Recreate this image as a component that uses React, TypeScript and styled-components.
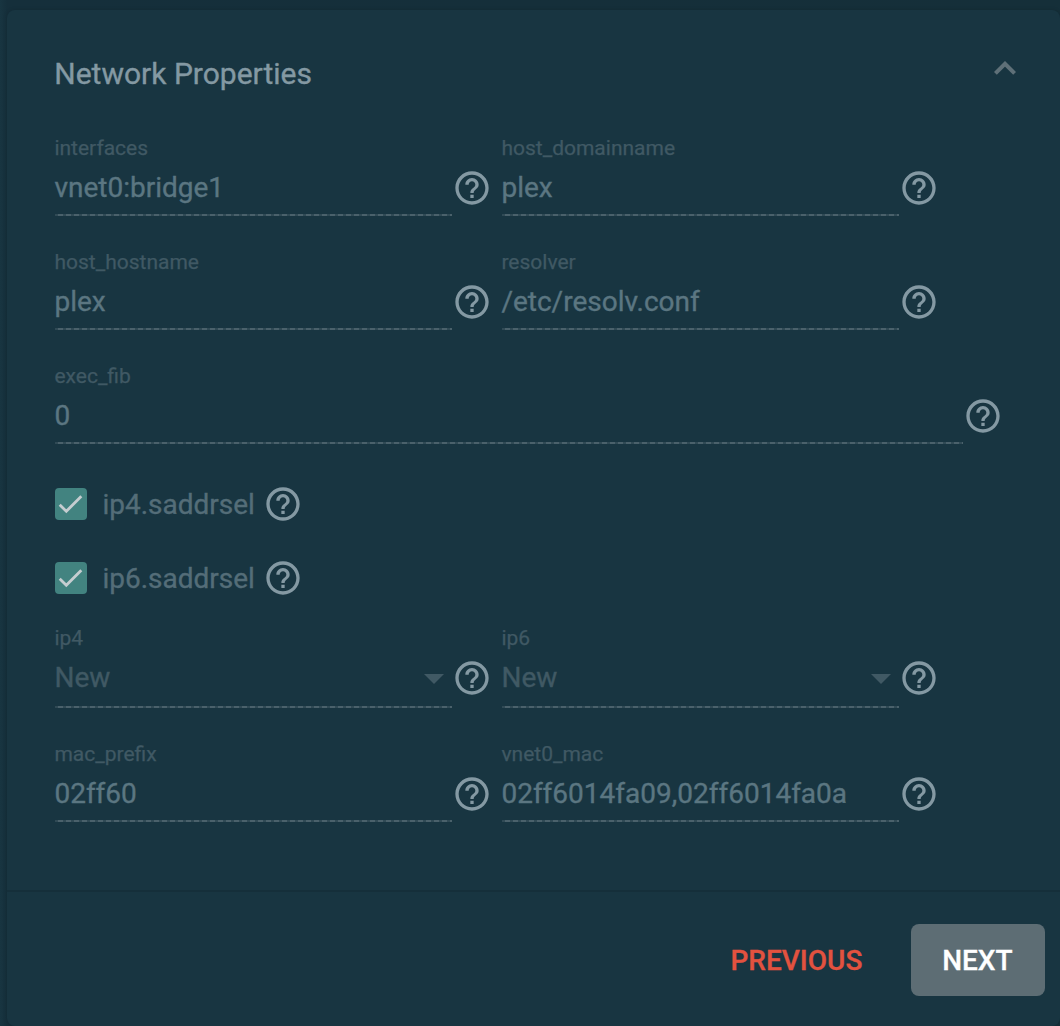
import React from "react";
import styled, { createGlobalStyle } from "styled-components";

const GlobalStyle = createGlobalStyle`
  * { box-sizing: border-box; }
  html, body { margin: 0; padding: 0; }
  body {
    background: #17323e;
    font-family: Roboto, "Liberation Sans", sans-serif;
    overflow: hidden;
  }
`;

const Page = styled.div`
  width: 1060px;
  height: 1026px;
  padding: 10px 0 0 7px;
  overflow: hidden;
  background: linear-gradient(to right, #183541 0, #152f3b 7px, #152f39 100%);
`;

const Card = styled.section`
  display: flex;
  flex-direction: column;
  height: 1016px;
  background: #183541;
  border-radius: 8px;
  box-shadow: 0 0 4px rgba(0, 0, 0, 0.14);
`;

const Header = styled.header`
  display: flex;
  justify-content: space-between;
  align-items: flex-start;
  height: 126px;
  padding: 44px 44px 0 48px;
`;

const Title = styled.h2`
  margin: 0;
  font-size: 30px;
  line-height: 39px;
  font-weight: 400;
  text-indent: -0.7px;
  color: #8499a3;
  -webkit-text-stroke: 0.35px #8499a3;
`;

const Chevron = styled.svg`
  width: 22px;
  height: 14px;
  margin-top: 7px;
  fill: none;
  stroke: #5f7078;
  stroke-width: 4;
`;

const Body = styled.div`
  display: flex;
  flex-direction: column;
  height: 754px;
  padding-left: 48px;
`;

const Row = styled.div<{ $after: number }>`
  display: flex;
  gap: 10px;
  margin-bottom: ${(p) => p.$after}px;
`;

const FieldGroup = styled.div`
  display: flex;
  align-items: flex-start;
`;

const FieldBox = styled.div<{ $width: number; $tall?: boolean }>`
  display: flex;
  flex-direction: column;
  width: ${(p) => p.$width}px;
  height: ${(p) => (p.$tall ? 82 : 80)}px;
  text-indent: -0.6px;
`;

const Label = styled.label`
  font-size: 21px;
  line-height: 24px;
  color: #405964;
  -webkit-text-stroke: 0.25px #405964;
`;

const ValueLine = styled.div<{ $dim?: boolean }>`
  display: flex;
  align-items: center;
  justify-content: space-between;
  height: 32px;
  margin-top: 12px;
  padding-right: 8px;
  font-size: 28px;
  line-height: 32px;
  white-space: nowrap;
  color: ${(p) => (p.$dim ? "#405964" : "#5b7681")};
  -webkit-text-stroke: 0.35px ${(p) => (p.$dim ? "#405964" : "#5b7681")};
`;

const Underline = styled.div`
  height: 2px;
  margin-top: auto;
  background: repeating-linear-gradient(to right, #304a55 0 3px, #4a616b 3px 8px);
`;

const Arrow = styled.span`
  border-left: 10px solid transparent;
  border-right: 10px solid transparent;
  border-top: 10px solid #405964;
  margin-top: 2px;
`;

const HelpSvg = styled.svg<{ $top: number }>`
  width: 40px;
  height: 40px;
  margin-top: ${(p) => p.$top}px;
  fill: #8499a3;
  flex: none;
`;

const CheckRow = styled.div<{ $after: number }>`
  display: flex;
  align-items: center;
  height: 32px;
  margin-bottom: ${(p) => p.$after}px;
`;

const CheckBox = styled.span`
  display: flex;
  width: 32px;
  height: 32px;
  border-radius: 4px;
  background: #428380;
`;

const CheckMark = styled.svg`
  width: 32px;
  height: 32px;
  fill: none;
  stroke: #c5cdd0;
  stroke-width: 2.8;
`;

const CheckLabel = styled.span`
  width: 176px;
  padding: 2px 0 0 16px;
  font-size: 28px;
  line-height: 32px;
  text-indent: -0.6px;
  color: #546d78;
  -webkit-text-stroke: 0.35px #546d78;
`;

const Footer = styled.footer`
  display: flex;
  justify-content: flex-end;
  align-items: flex-start;
  gap: 16px;
  flex: 1;
  padding: 32px 15px 0 0;
  border-top: 2px solid #152f3a;
`;

const Button = styled.button<{ $primary?: boolean }>`
  height: 72px;
  width: ${(p) => (p.$primary ? 134 : 196)}px;
  padding: 1px 0 0;
  border: 0;
  border-radius: 8px;
  font: 500 28px/71px Roboto, "Liberation Sans", sans-serif;
  text-indent: -1.2px;
  color: ${(p) => (p.$primary ? "#ffffff" : "#e2523f")};
  background: ${(p) => (p.$primary ? "#5d6d74" : "transparent")};
  -webkit-text-stroke: 0.3px currentColor;
`;

const Help = ({ top = 32 }: { top?: number }) => (
  <HelpSvg $top={top} viewBox="0 0 24 24">
    <path d="M11 18h2v-2h-2v2zm1-16C6.48 2 2 6.48 2 12s4.48 10 10 10 10-4.48 10-10S17.52 2 12 2zm0 18c-4.41 0-8-3.59-8-8s3.59-8 8-8 8 3.59 8 8-3.59 8-8 8zm0-14c-2.21 0-4 1.79-4 4h2c0-1.1.9-2 2-2s2 .9 2 2c0 2-3 1.75-3 5h2c0-2.25 3-2.5 3-5 0-2.21-1.79-4-4-4z" />
  </HelpSvg>
);

type FieldProps = { label: string; value: string; width?: number; select?: boolean };

const Field = ({ label, value, width = 397, select }: FieldProps) => (
  <FieldGroup>
    <FieldBox $width={width} $tall={select}>
      <Label>{label}</Label>
      <ValueLine $dim={select}>
        {value}
        {select && <Arrow />}
      </ValueLine>
      <Underline />
    </FieldBox>
    <Help />
  </FieldGroup>
);

const Check = ({ label, after }: { label: string; after: number }) => (
  <CheckRow $after={after}>
    <CheckBox>
      <CheckMark viewBox="0 0 32 32">
        <path d="M4.7 16.7 L11.3 23.3 L26.3 8.3" />
      </CheckMark>
    </CheckBox>
    <CheckLabel>{label}</CheckLabel>
    <Help top={0} />
  </CheckRow>
);

export default function App() {
  return (
    <Page>
      <GlobalStyle />
      <Card>
        <Header>
          <Title>Network Properties</Title>
          <Chevron viewBox="0 0 22 14">
            <path d="M1.4 12.4 L11 2.8 L20.6 12.4" />
          </Chevron>
        </Header>
        <Body>
          <Row $after={34}>
            <Field label="interfaces" value="vnet0:bridge1" />
            <Field label="host_domainname" value="plex" />
          </Row>
          <Row $after={34}>
            <Field label="host_hostname" value="plex" />
            <Field label="resolver" value="/etc/resolv.conf" />
          </Row>
          <Row $after={44}>
            <Field label="exec_fib" value="0" width={908} />
          </Row>
          <Check label="ip4.saddrsel" after={42} />
          <Check label="ip6.saddrsel" after={32} />
          <Row $after={34}>
            <Field label="ip4" value="New" select />
            <Field label="ip6" value="New" select />
          </Row>
          <Row $after={0}>
            <Field label="mac_prefix" value="02ff60" />
            <Field label="vnet0_mac" value="02ff6014fa09,02ff6014fa0a" />
          </Row>
        </Body>
        <Footer>
          <Button>PREVIOUS</Button>
          <Button $primary>NEXT</Button>
        </Footer>
      </Card>
    </Page>
  );
}
